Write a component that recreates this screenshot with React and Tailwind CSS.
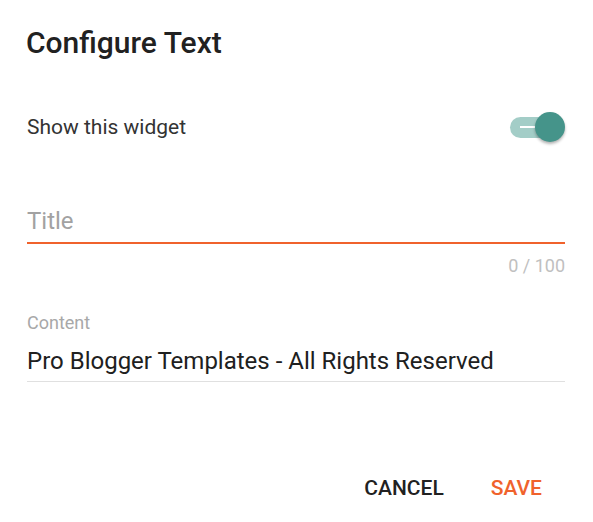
import React from "react";

export default function App() {
  return (
    <div
      className="w-[593px] h-[522px] bg-white flex flex-col px-[27px] pr-[28px] pt-[25px]"
      style={{ fontFamily: "Roboto, 'Noto Sans', sans-serif" }}
    >
      <h1 className="text-[30px] leading-[36px] font-medium text-[#212121] -ml-[1px]">
        Configure Text
      </h1>

      <div className="mt-[51px] flex items-center justify-between h-[30px]">
        <span className="text-[21px] leading-[30px] text-[#333333]">Show this widget</span>
        <div className="relative w-[56px] h-[30px] mr-[0px]">
          <div className="absolute left-[1px] top-[5px] w-[51px] h-[21px] rounded-full bg-[#a3cdc7]">
            <div className="absolute left-[10px] top-[9px] w-[16px] h-[2px] bg-white" />
          </div>
          <div className="absolute right-0 top-0 w-[30px] h-[30px] rounded-full bg-[#45948a] shadow-[0_2px_3px_rgba(0,0,0,0.3)]" />
        </div>
      </div>

      <div className="mt-[64px] flex flex-col">
        <div className="border-b-2 border-[#f0622c] pb-[6px]">
          <span className="block text-[24px] leading-[30px] text-[#a2a2a2]">Title</span>
        </div>
        <div className="mt-[10px] text-right text-[18px] leading-[24px] text-[#c0c0c0]">0 / 100</div>
      </div>

      <div className="mt-[33px] flex flex-col">
        <span className="text-[18px] leading-[24px] text-[#a8a8a8]">Content</span>
        <div className="mt-[11px] border-b border-[#e0e0e0] pb-[5px]">
          <span className="block text-[24px] leading-[30px] text-[#202020]">
            Pro Blogger Templates - All Rights Reserved
          </span>
        </div>
      </div>

      <div className="mt-[91px] flex justify-end gap-[23px] mr-[11px]">
        <button className="px-[12px] h-[30px] text-[21px] leading-[30px] font-medium text-[#212121] uppercase">
          Cancel
        </button>
        <button className="px-[12px] h-[30px] text-[21px] leading-[30px] font-medium text-[#f0622c] uppercase">
          Save
        </button>
      </div>
    </div>
  );
}
